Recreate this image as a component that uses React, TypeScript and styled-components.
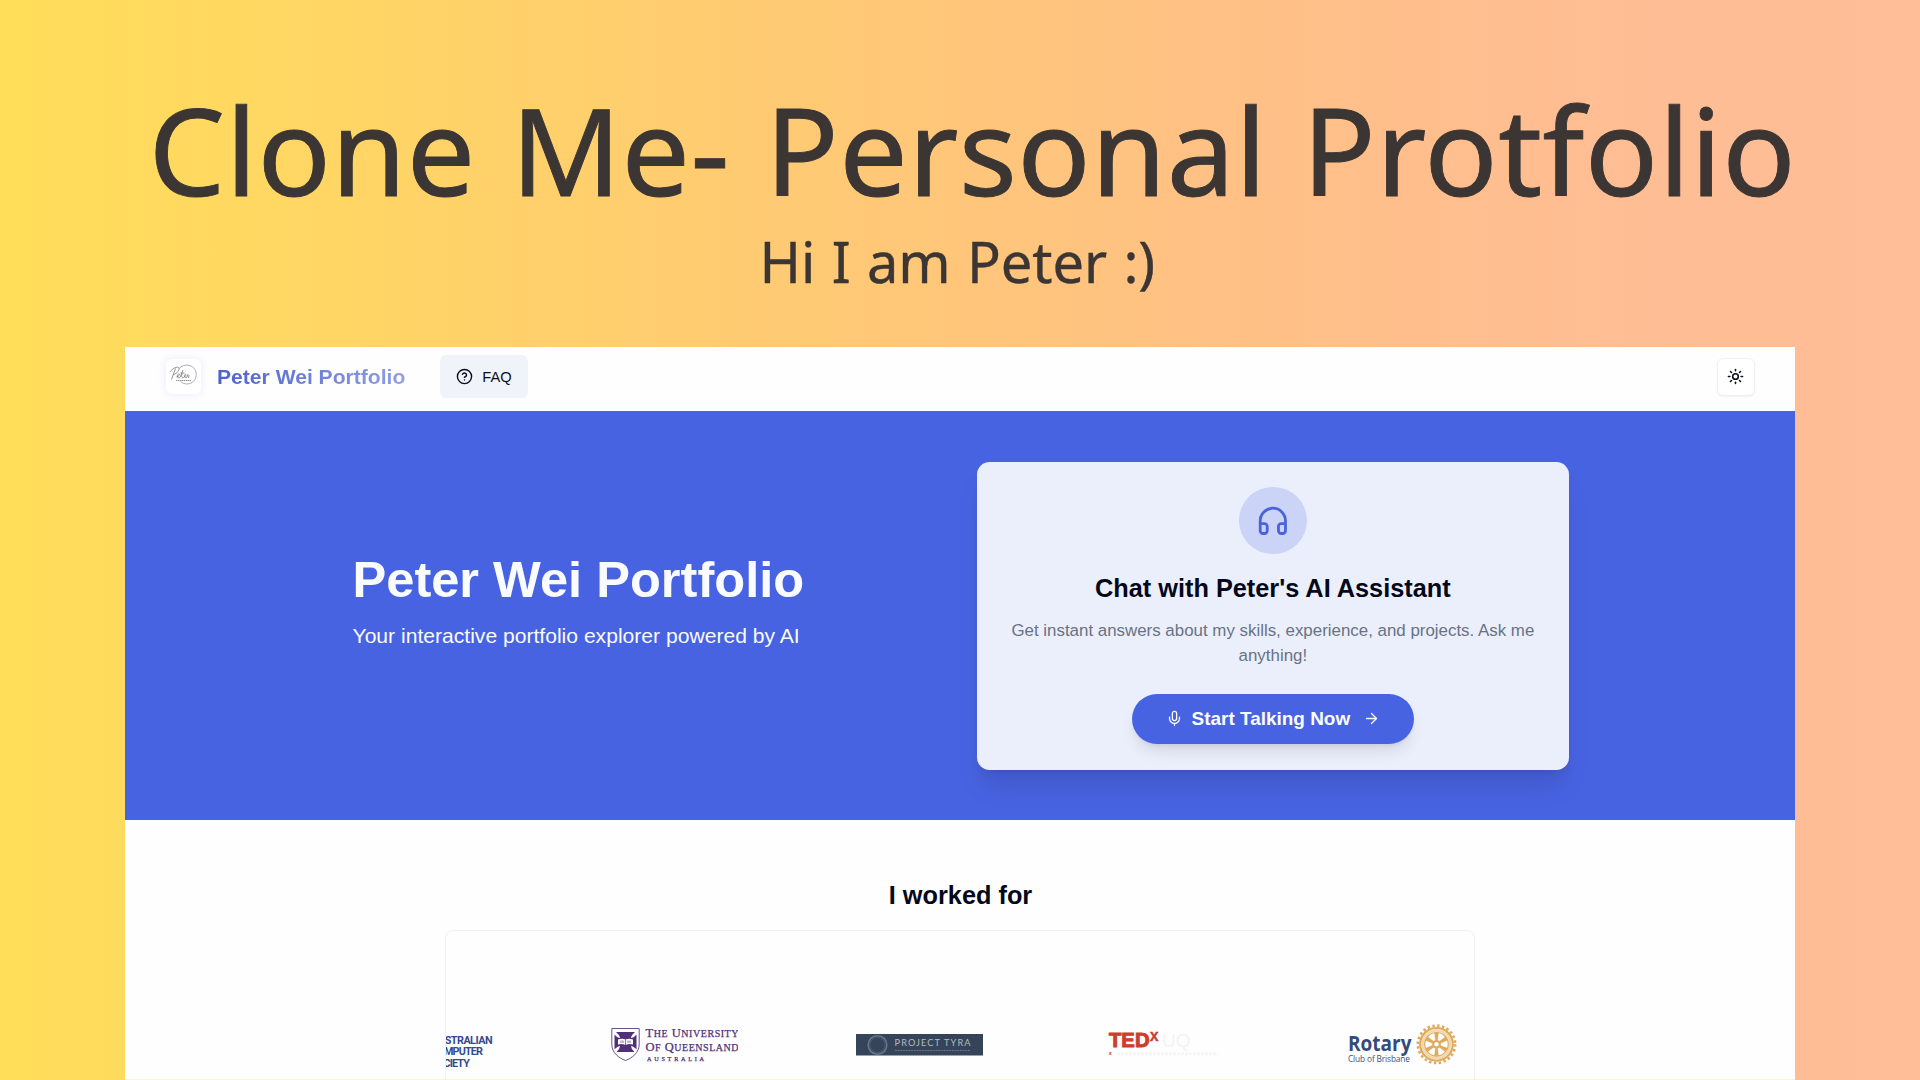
import React from "react";
import styled, { createGlobalStyle } from "styled-components";
import { ArrowRight, CircleHelp, Headphones, Mic, Sun } from "lucide-react";

const GlobalStyle = createGlobalStyle`
  * { box-sizing: border-box; }
  body {
    margin: 0;
    width: 1920px;
    height: 1080px;
    overflow: hidden;
    font-family: "Liberation Sans", Arial, sans-serif;
  }
  h1, h2, h3, p { margin: 0; }
  svg { display: block; flex: none; }
`;

const Poster = styled.main`
  width: 1920px;
  height: 1080px;
  display: flex;
  flex-direction: column;
  overflow: hidden;
  background: linear-gradient(90deg, #ffde59 0%, #ffc876 45%, #ffc086 65%, #ffbd94 85%, #ffbd98 100%);
`;

const Banner = styled.header`
  height: 347px;
  flex: none;
  padding-top: 79px;
  display: flex;
  flex-direction: column;
  color: #3b3533;
  font-family: "Noto Sans", sans-serif;
  white-space: nowrap;
`;

const Title = styled.h1`
  padding-left: 148.5px;
  font-size: 121.4px;
  line-height: 140px;
  font-weight: 400;
  letter-spacing: 0.45px;
  word-spacing: 3.3px;
  -webkit-text-stroke: 0.9px #3b3533;
`;

const Tagline = styled.p`
  padding-left: 759.5px;
  margin-top: 11.5px;
  font-size: 56px;
  line-height: 60px;
  letter-spacing: -0.1px;
  word-spacing: 2px;
  -webkit-text-stroke: 0.4px #3b3533;
`;

const Site = styled.section`
  width: 1670px;
  height: 732px;
  margin-left: 125px;
  flex: none;
  display: flex;
  flex-direction: column;
  overflow: hidden;
  background: #fefefe;
`;

const Nav = styled.nav`
  height: 63.5px;
  flex: none;
  display: flex;
  align-items: center;
  padding: 0 40.5px 4.5px 40.5px;
`;

const Monogram = styled.div`
  width: 35px;
  height: 35px;
  border-radius: 6px;
  background: #fff;
  box-shadow: 0 0 8px rgba(80, 90, 200, 0.12);
`;

const Brand = styled.span`
  margin-left: 16.5px;
  font-size: 21.1px;
  font-weight: 700;
  background: linear-gradient(90deg, #4c61cf, #929fdf);
  background-clip: text;
  color: transparent;
`;

const NavButton = styled.button`
  margin-left: 34.5px;
  width: 88.5px;
  height: 42.5px;
  padding: 0;
  display: flex;
  align-items: center;
  justify-content: center;
  gap: 9px;
  border: 0;
  border-radius: 6px;
  background: #f0f4fa;
  color: #0b0f1c;
  font: 14.7px "Liberation Sans", Arial, sans-serif;
`;

const ThemeButton = styled.button`
  margin-left: auto;
  width: 38px;
  height: 38px;
  padding: 0;
  display: grid;
  place-items: center;
  border: 1px solid #eff0f3;
  border-radius: 6px;
  background: #fff;
  color: #0b0f1c;
  box-shadow: 0 1px 2px rgba(0, 0, 0, 0.05);
`;

const Hero = styled.div`
  height: 409.5px;
  flex: none;
  display: flex;
  align-items: center;
  justify-content: space-between;
  padding: 1px 226.4px 0 227.5px;
  background: #4863e2;
`;

const HeroCopy = styled.div`
  padding-bottom: 28px;
  color: #fafbff;
`;

const HeroTitle = styled.h2`
  font-size: 50.6px;
  line-height: 51px;
`;

const HeroText = styled.p`
  margin-top: 16px;
  font-size: 21.1px;
  line-height: 29px;
`;

const ChatCard = styled.article`
  width: 591.5px;
  height: 308px;
  padding: 25.3px 25px;
  display: flex;
  flex-direction: column;
  align-items: center;
  border-radius: 12.5px;
  background: #ebeffc;
  box-shadow: 0 21px 26px -5px rgba(0, 0, 0, 0.1), 0 8px 10px -6px rgba(0, 0, 0, 0.1);
  text-align: center;
`;

const IconCircle = styled.div`
  width: 67.4px;
  height: 67.4px;
  flex: none;
  display: grid;
  place-items: center;
  border-radius: 50%;
  background: #cbd3f6;
  color: #4863dc;
`;

const CardTitle = styled.h3`
  margin-top: 17.3px;
  font-size: 25.3px;
  line-height: 33.7px;
  color: #04081a;
`;

const CardText = styled.p`
  margin-top: 12.2px;
  font-size: 16.9px;
  line-height: 25.3px;
  color: #697283;
`;

const TalkButton = styled.button`
  margin-top: 25.3px;
  width: 281.5px;
  height: 50.5px;
  flex: none;
  padding: 0;
  display: flex;
  align-items: center;
  justify-content: center;
  border: 0;
  border-radius: 26px;
  background: #4863e2;
  color: #fbfcff;
  font: 700 18.95px "Liberation Sans", Arial, sans-serif;
  box-shadow: 0 10px 15px -3px rgba(0, 0, 0, 0.1), 0 4px 6px -4px rgba(0, 0, 0, 0.1);
`;

const ButtonLabel = styled.span`
  margin: 0 13px 0 9px;
`;

const Employers = styled.section`
  flex: 1;
  display: flex;
  flex-direction: column;
  align-items: center;
  padding-top: 58px;
`;

const EmployersTitle = styled.h2`
  padding-left: 1px;
  font-size: 25.3px;
  line-height: 34px;
  color: #04081a;
`;

const Carousel = styled.div`
  width: 1030px;
  height: 240px;
  flex: none;
  margin-top: 18px;
  padding-top: 84px;
  display: flex;
  align-items: flex-start;
  gap: 117.7px;
  border: 1px solid #f0f1f3;
  border-radius: 8px;
  overflow: hidden;
`;

const LogoSlot = styled.div<{ $first?: boolean }>`
  width: 127.5px;
  height: 60px;
  flex: none;
  margin-left: ${(p) => (p.$first ? "-80.700px" : "0")};
`;

const BottomEdge = styled.div`
  height: 1px;
  width: 1670px;
  margin-left: 125px;
  background: #fbf1dc;
`;

const SANS = "Liberation Sans, Arial, sans-serif";

function PeterMark() {
  return (
    <svg width="35" height="35" viewBox="0 0 35 35" fill="none" stroke="#777" strokeWidth="0.8">
      <path d="M13 9.5C18 4 27 5.500 29.500 11.500C32 18 28 24.500 21.500 25C18.500 25 16 24 14.500 22.500" stroke="#999" />
      <path d="M5.500 20.500 9.500 9.500M4.500 13C6 9 12.500 6.500 13 9.500C13 12.500 9 15.500 7.500 15.500M10.500 18C14 17 14 14.500 12.500 15C10.500 16 11 20 14 18.500L17 11M14.500 14H18.500M16 15C15 19 17 19.500 18 18C21 17 20 14.500 19 15.500C17.500 18 19.500 19.500 21 18L22 15.500 23 16.500 22.500 19" />
      <path d="M10 21.500H25" strokeDasharray="1.500 .5" />
    </svg>
  );
}

function ComputerSociety() {
  return (
    <svg width="127.5" height="60" viewBox="0 0 127.5 60" fontFamily="Roboto, sans-serif" fontWeight="700" fontSize="10.8" fill="#34498e">
      <text x="66.500" y="29" textLength="61">AUSTRALIAN</text>
      <text x="66" y="40.300" textLength="52">COMPUTER</text>
      <text x="66" y="51.600" textLength="39">SOCIETY</text>
    </svg>
  );
}

function Queensland() {
  return (
    <svg width="127.5" height="60" viewBox="0 0 127.5 60" fill="#513078">
      <path d="M.8 13.500H28.200V29C28.200 38 21 43 14.500 45.500C8 43 .8 38 .8 29Z" fill="#fff" stroke="#6b5288" />
      <path d="M5 17H24Q20 20.500 20 23Q22.500 23 25.500 19.500V34.500Q22.500 31 20 31Q20 34 23.500 37H5.500Q9 34 9 31Q6.500 31 3.500 34.500V19.500Q6.500 23 9 23Q9 20.500 5 17Z" />
      <path d="M7 24.500Q11 23 14.500 24.500Q18 23 22 24.500V29.500Q18 28.500 14.500 30Q11 28.500 7 29.500Z" fill="#fff" />
      <path d="M14.500 24.500V30M10 25.500V28M12 25.500V28M17 25.500V28M19 25.500V28" stroke="#513078" strokeWidth=".7" />
      <g fontFamily="Liberation Serif, serif" stroke="#513078" strokeWidth=".25">
        <text x="34.500" y="22" fontSize="12.500" textLength="93">T<tspan fontSize="10">HE</tspan> U<tspan fontSize="10">NIVERSITY</tspan></text>
        <text x="34.500" y="35.500" fontSize="12.500" textLength="93">O<tspan fontSize="10">F</tspan> Q<tspan fontSize="10">UEENSLAND</tspan></text>
        <text x="36" y="45.500" fontSize="6.200" textLength="57">AUSTRALIA</text>
      </g>
    </svg>
  );
}

function ProjectTyra() {
  return (
    <svg width="127.5" height="60" viewBox="0 0 127.5 60">
      <rect x="0" y="19" width="127.500" height="21.500" fill="#364459" />
      <circle cx="21.500" cy="30" r="9.300" fill="none" stroke="#68778c" strokeWidth="1.600" />
      <circle cx="21.500" cy="30" r="7.600" fill="none" stroke="#526278" strokeWidth=".7" />
      <text x="38.500" y="30.800" fontFamily="Lato, sans-serif" fontSize="9.200" fill="#b3bbc5" textLength="76">PROJECT TYRA</text>
      <path d="M39 35.500H114" stroke="#64728a" strokeWidth="1" strokeDasharray="2 .7" />
    </svg>
  );
}

function TedX() {
  return (
    <svg width="127.5" height="60" viewBox="0 0 127.5 60" fontFamily={SANS}>
      <text x="8" y="32" fontSize="20" fontWeight="700" fill="#cd3f2c" stroke="#cd3f2c" strokeWidth="1" textLength="40.500" lengthAdjust="spacingAndGlyphs">TED</text>
      <text x="48.800" y="26.300" fontSize="16" fontWeight="700" fill="#cd3f2c" stroke="#cd3f2c" strokeWidth=".3" textLength="9">x</text>
      <text x="61" y="31.500" fontSize="19" fill="#f4f4f6">UQ</text>
      <text x="7.800" y="40.300" fontSize="5.500" fontWeight="700" fill="#cd3f2c">x</text>
      <path d="M16 38.800H117" stroke="#f5f5f6" strokeWidth="2.500" strokeDasharray="3 1" />
    </svg>
  );
}

function Rotary() {
  const cx = 90.5;
  const cy = 29.3;
  return (
    <svg width="127.5" height="60" viewBox="0 0 127.5 60">
      <text x="2" y="36.300" fontFamily="Open Sans, sans-serif" fontSize="21" fontWeight="700" fill="#344a7c" textLength="63.500" lengthAdjust="spacingAndGlyphs">Rotary</text>
      <text x="2" y="46.500" fontFamily="Open Sans, sans-serif" fontSize="8.300" fill="#3d507f" textLength="62">Club of Brisbane</text>
      <g fill="none" stroke="#dfaa5b">
        <circle cx={cx} cy={cy} r="18.700" strokeWidth="2.600" strokeDasharray="2.45 2.45" />
        <circle cx={cx} cy={cy} r="16.300" strokeWidth="2.200" />
        <circle cx={cx} cy={cy} r="13.800" strokeWidth="2.600" stroke="#f0d9ae" />
        <circle cx={cx} cy={cy} r="11.800" strokeWidth="1.200" />
        {[0, 60, 120, 180, 240, 300].map((a) => (
          <path key={a} d={`M${cx - 1} ${cy - 3}L${cx - 2} ${cy - 11.5}H${cx + 2}L${cx + 1} ${cy - 3}Z`} fill="#dfaa5b" strokeWidth=".3" transform={`rotate(${a} ${cx} ${cy})`} />
        ))}
        <circle cx={cx} cy={cy} r="3.300" strokeWidth="2" fill="#fff" />
      </g>
    </svg>
  );
}

export default function App() {
  return (
    <Poster>
      <GlobalStyle />
      <Banner>
        <Title>Clone Me- Personal Protfolio</Title>
        <Tagline>Hi I am Peter :)</Tagline>
      </Banner>
      <Site>
        <Nav>
          <Monogram><PeterMark /></Monogram>
          <Brand>Peter Wei Portfolio</Brand>
          <NavButton><CircleHelp size={17} strokeWidth={2} />FAQ</NavButton>
          <ThemeButton><Sun size={17} strokeWidth={2.2} /></ThemeButton>
        </Nav>
        <Hero>
          <HeroCopy>
            <HeroTitle>Peter Wei Portfolio</HeroTitle>
            <HeroText>Your interactive portfolio explorer powered by AI</HeroText>
          </HeroCopy>
          <ChatCard>
            <IconCircle><Headphones size={33.7} strokeWidth={2} /></IconCircle>
            <CardTitle>Chat with Peter's AI Assistant</CardTitle>
            <CardText>Get instant answers about my skills, experience, and projects. Ask me anything!</CardText>
            <TalkButton>
              <Mic size={17} strokeWidth={1.8} />
              <ButtonLabel>Start Talking Now</ButtonLabel>
              <ArrowRight size={17} strokeWidth={1.8} />
            </TalkButton>
          </ChatCard>
        </Hero>
        <Employers>
          <EmployersTitle>I worked for</EmployersTitle>
          <Carousel>
            <LogoSlot $first><ComputerSociety /></LogoSlot>
            <LogoSlot><Queensland /></LogoSlot>
            <LogoSlot><ProjectTyra /></LogoSlot>
            <LogoSlot><TedX /></LogoSlot>
            <LogoSlot><Rotary /></LogoSlot>
          </Carousel>
        </Employers>
      </Site>
      <BottomEdge />
    </Poster>
  );
}
